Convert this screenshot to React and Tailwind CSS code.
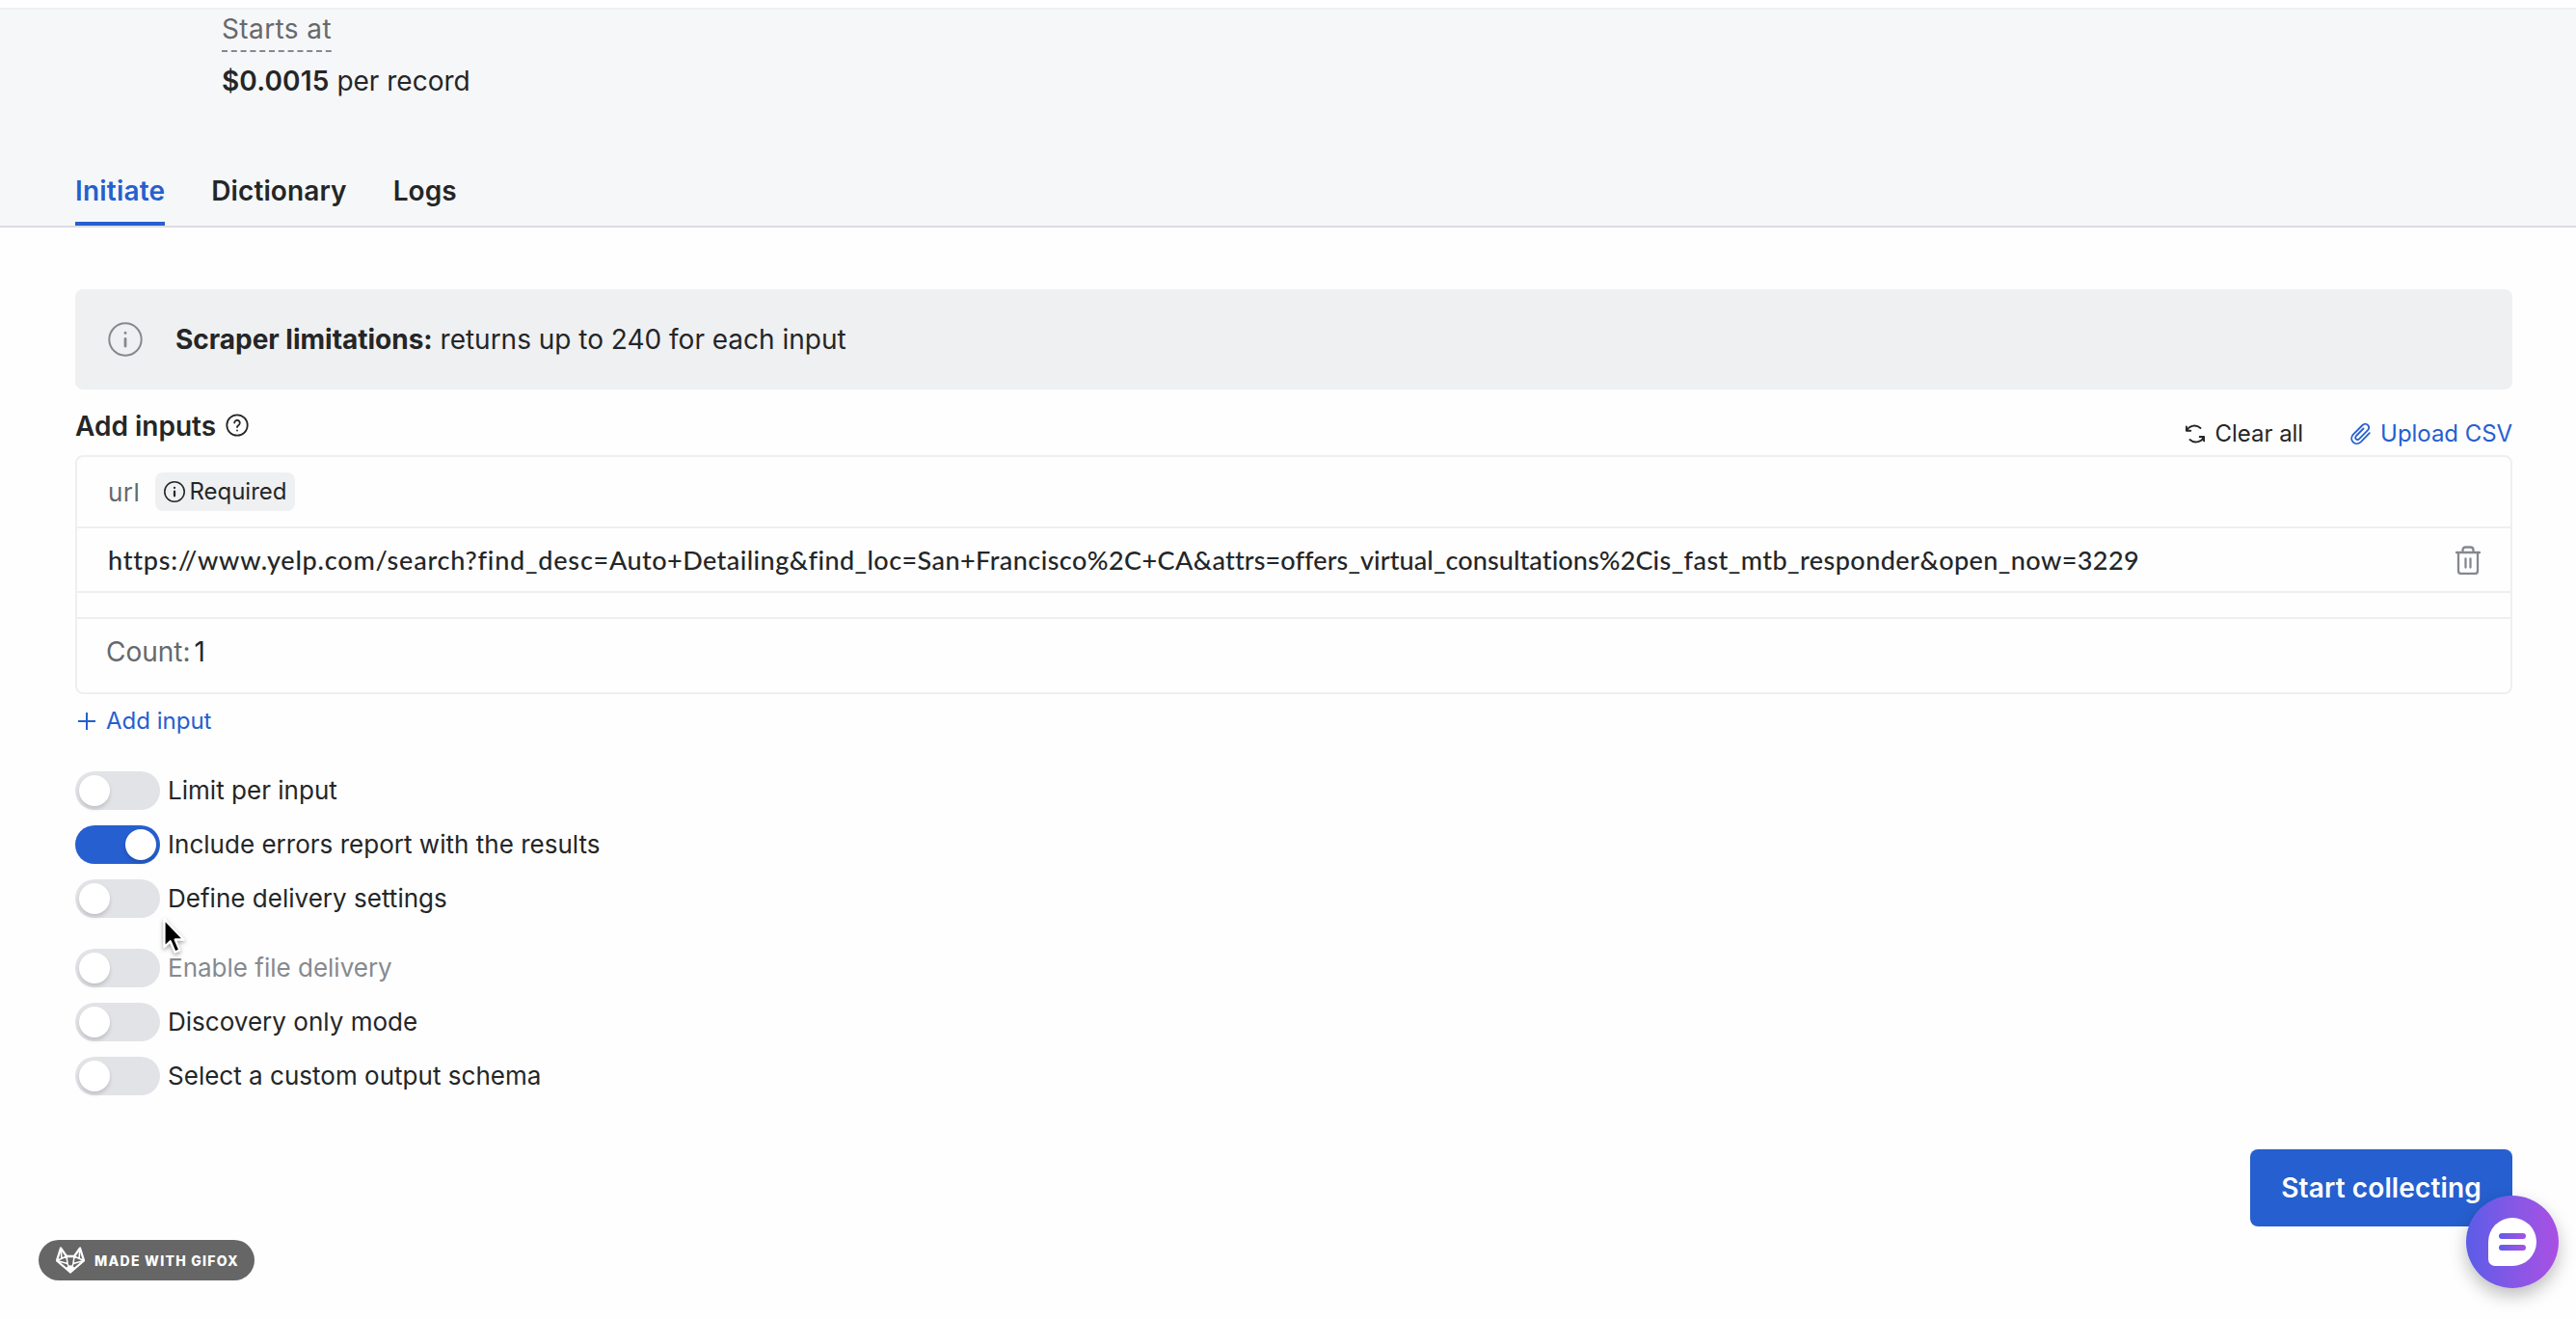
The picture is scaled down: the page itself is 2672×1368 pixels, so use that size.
import React from "react";

function InfoIcon({ className, sw = 1.5 }) {
  return (
    <svg viewBox="0 0 36 36" className={className} fill="none" stroke="currentColor" strokeWidth={sw} strokeLinecap="round">
      <circle cx="18" cy="18" r="16.7" />
      <path d="M18 17.500v7.500" strokeWidth={sw * 1.4} />
      <path d="M18 11.2v.2" strokeWidth={sw * 1.4} />
    </svg>
  );
}

function Toggle({ label, on, muted }) {
  return (
    <div className="flex h-10 items-center gap-2">
      <div className={on ? "flex h-10 w-[88px] items-center justify-end rounded-full bg-[#265fcf] px-1" : "flex h-10 w-[88px] items-center rounded-full bg-[#e2e3e7] px-1"}>
        <div className="size-8 rounded-full bg-white shadow-[0_3px_4px_rgba(0,0,0,0.15)]" />
      </div>
      <span className={muted ? "text-[26px] leading-10 text-[#868a8f]" : "text-[26px] leading-10 tracking-[0.02px] text-[#242627]"}>{label}</span>
    </div>
  );
}

export default function App() {
  return (
    <div className="relative flex h-[1368px] w-[2672px] flex-col overflow-hidden bg-[#fefefe] font-['Inter',sans-serif] text-[#242627]">
      <header className="mt-2 flex h-[228px] shrink-0 flex-col justify-between border-y-2 border-t-[#eeeff1] border-b-[#dcdde2] bg-[#f6f7f8]">
        <div className="ml-[230px] flex flex-col items-start">
          <div className="flex h-[42px] items-end">
            <span className="text-[28px] leading-[44px] tracking-[0.4px] text-[#66696c]">Starts at</span>
          </div>
          <svg className="h-[2px] w-[114px]" viewBox="0 0 114 2">
            <path d="M0 1H114" stroke="#85898e" strokeWidth="2" strokeDasharray="6 3.8" />
          </svg>
          <div className="mt-3 text-[28px] leading-9"><b className="font-semibold tracking-[0.15px]">$0.0015</b> per record</div>
        </div>
        <nav className="ml-[78px] flex h-[58px] gap-12 text-[28px] font-semibold leading-[44px] tracking-[0.1px]">
          <span className="border-b-4 border-[#265fcf] tracking-[0.2px] text-[#265fcf]">Initiate</span>
          <span>Dictionary</span>
          <span>Logs</span>
        </nav>
      </header>

      <main className="ml-[78px] mt-16 flex w-[2528px] flex-col">
        <section className="flex h-[104px] items-center rounded-lg bg-[#eff0f2] pl-[34px] text-[28px] tracking-[-0.01px]">
          <InfoIcon className="size-9 text-[#85898e]" sw={2} />
          <p className="ml-[34px]"><b className="font-bold">Scraper limitations:</b> returns up to 240 for each input</p>
        </section>

        <div className="flex h-[68px] items-start justify-between">
          <div className="mt-[18px] flex items-start gap-[10px]">
            <h2 className="text-[28px] font-semibold leading-10">Add inputs</h2>
            <svg viewBox="0 0 24 24" className="mt-[7px] size-6" fill="none" stroke="currentColor" strokeWidth="1.8" strokeLinecap="round">
              <circle cx="12" cy="12" r="10.7" />
              <path d="M9.2 9.6a2.8 2.8 0 1 1 4.4 2.3c-1 .7-1.6 1.1-1.6 2.1M12 17.4v.2" />
            </svg>
          </div>
          <div className="mt-[30px] flex items-center text-[24px] leading-8 tracking-[-0.05px]">
            <svg viewBox="0 0 20 20" className="mr-[11px] size-5" fill="none" stroke="currentColor" strokeWidth="1.9" strokeLinecap="round" strokeLinejoin="round">
              <path d="M.9 2.5v4.2h4.4M1.2 6.5C3 2.200 10-.8 15.500 4M19.100 17.300V13h-4.400M18.800 13.300C17 17.800 10 20.800 4.500 16" />
            </svg>
            <span>Clear all</span>
            <svg viewBox="0 0 22 24" className="ml-[48px] mr-[10px] h-6 w-[22px] text-[#265fcf]" fill="none" stroke="currentColor" strokeWidth="1.8" strokeLinecap="round" strokeLinejoin="round">
              <path d="M20.800 11.200l-9 9.100c-5.600 5.400-13-2-7.900-7.600L13.500 3c4-3.700 9 1.500 5.300 5.300l-8.600 8.800c-2.500 2.300-5.400-.6-3.100-3.100l7.400-7.500" />
            </svg>
            <span className="text-[#265fcf]">Upload CSV</span>
          </div>
        </div>

        <section className="flex h-[248px] flex-col rounded-lg border-2 border-[#efeff2]">
          <div className="flex h-[72px] items-center pl-8">
            <span className="text-[26px] tracking-[0.5px] text-[#66696c]">url</span>
            <span className="ml-4 flex h-10 w-[145px] items-center gap-1 rounded-lg bg-[#eff0f2] pl-[9px] text-[24px]">
              <InfoIcon className="size-[22px]" sw={2.6} />
              Required
            </span>
          </div>
          <div className="flex h-[69px] items-center justify-between border-y-2 border-[#efeff2] pl-8 pr-[31px]">
            <span className="mt-[2px] whitespace-nowrap font-['Lato',sans-serif] text-[27px] font-medium tracking-[0.44px]">
              <span className="tracking-[0.79px]">https://www.yelp.com/search?find_desc=</span>Auto+Detailing&amp;find_loc=San+Francisco%2C+CA&amp;<span className="tracking-[0.1px] [font-variant-ligatures:none]">attrs=offers_virtual_consultations%2C</span>is_fast_mtb_responder&amp;open_now=3229
            </span>
            <svg viewBox="0 0 26 30" className="h-[30px] w-[26px] text-[#85898e]" fill="none" stroke="currentColor" strokeWidth="2.3" strokeLinecap="round" strokeLinejoin="round">
              <path d="M1 7h24M3 7v19q0 3 3 3h14q3 0 3-3V7M7.500 7V4.500q0-3 3-3h5q3 0 3 3V7M10.500 13.500v9M15.500 13.500v9" />
            </svg>
          </div>
          <div className="h-[27px] border-b-2 border-[#efeff2]" />
          <div className="flex flex-1 items-center gap-1 pb-[8px] pl-[30px] text-[28px]">
            <span className="text-[#66696c]">Count:</span>
            <span>1</span>
          </div>
        </section>

        <div className="mt-[10px] flex h-9 items-center gap-[10px] text-[24px] text-[#265fcf]">
          <svg viewBox="0 0 20 20" className="ml-[2px] size-5" stroke="currentColor" strokeWidth="2"><path d="M1 10h18M10 1v18" /></svg>
          Add input
        </div>

        <div className="mt-[34px] flex flex-col gap-4">
          <Toggle label="Limit per input" />
          <Toggle label="Include errors report with the results" on />
          <Toggle label="Define delivery settings" />
        </div>
        <div className="mt-8 flex flex-col gap-4">
          <Toggle label="Enable file delivery" muted />
          <Toggle label="Discovery only mode" />
          <Toggle label="Select a custom output schema" />
        </div>

        <button className="mt-14 flex h-20 w-[272px] items-center justify-center self-end rounded-lg bg-[#265fcf] text-[28px] font-semibold tracking-[0.12px] text-white">Start collecting</button>
      </main>

      <svg viewBox="0 0 22 34" className="absolute left-[168px] top-[951px] h-[40px] w-[26px] drop-shadow-[0_2px_2px_rgba(0,0,0,0.35)]">
        <path d="M2 2v24.500l5.300-5 4.100 9.500 4.200-1.800-4-9.200h7.600z" fill="#000" stroke="#fff" strokeWidth="2" strokeLinejoin="round" />
      </svg>

      <div className="absolute left-10 top-[1286px] flex h-[42px] w-56 items-center rounded-full bg-[#666] pl-[18px] text-white">
        <svg viewBox="0 0 30 28" className="h-7 w-[30px]" fill="none" stroke="currentColor" strokeWidth="1.600" strokeLinejoin="round">
          <path d="M5 1.500L1 14.500 15 26.500 29 14.500 25 1.500 19 10h-8z" strokeWidth="2.300" />
          <path d="M11 10l-10 4.500 11 3L15 26l3-8.500 11-3L19 10M11 10l1 7.500M19 10l-1 7.500M5 1.500l1 11M25 1.500l-1 11" />
          <path d="M11 22.500l4-2.500 4 2.500-4 4z" fill="currentColor" />
        </svg>
        <span className="ml-[10px] whitespace-nowrap text-[14px] font-extrabold tracking-[1.27px]">MADE WITH GIFOX</span>
      </div>

      <div className="absolute left-[2558px] top-[1240px] flex size-24 items-center justify-center rounded-full bg-linear-to-r from-[#5a5ce8] to-[#a94fe3] shadow-[0_8px_18px_rgba(0,0,0,0.25)]">
        <div className="flex size-[50px] flex-col items-center justify-center gap-[6px] rounded-[25px] rounded-bl-[7px] bg-white">
          <div className="h-[6px] w-7 rounded-full bg-linear-to-r from-[#5a5ce8] to-[#a94fe3]" />
          <div className="h-[6px] w-7 rounded-full bg-linear-to-r from-[#5a5ce8] to-[#a94fe3]" />
        </div>
      </div>
    </div>
  );
}
